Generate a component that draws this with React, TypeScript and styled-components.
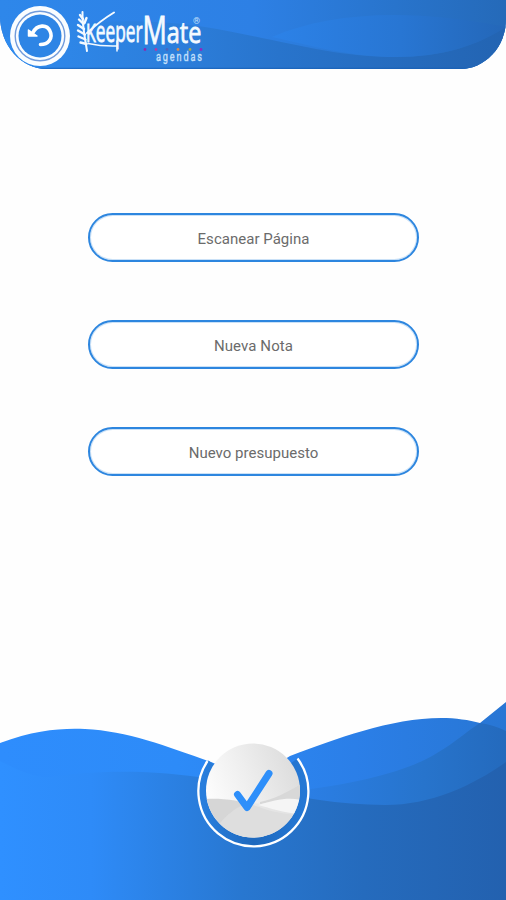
import React from 'react';
import styled, { createGlobalStyle } from 'styled-components';

const GlobalStyle = createGlobalStyle`
  * { box-sizing: border-box; }
  body { margin: 0; background: #fefefe; }
`;

const Screen = styled.div`
  display: flex;
  flex-direction: column;
  width: 506px;
  height: 900px;
  overflow: hidden;
  background: #fefefe;
  font-family: Roboto, 'Liberation Sans', sans-serif;
`;

const Header = styled.header`
  position: relative;
  flex: none;
  display: flex;
  align-items: flex-start;
  height: 69px;
  border-radius: 0 0 46px 47px / 0 0 50px 53px;
  background: #2877d6;
`;

const HeaderWaves = styled.svg`
  position: absolute;
  inset: 0;
  border-radius: inherit;
`;

const BackButton = styled.button`
  position: relative;
  flex: none;
  width: 60px;
  height: 60px;
  margin: 6px 0 0 10px;
  padding: 0;
  border: 0;
  border-radius: 50%;
  background: none;
  svg { display: block; }
`;

const Logo = styled.svg`
  position: relative;
  flex: none;
  width: 140px;
  height: 69px;
  fill: #f4faff;
  font-family: 'Open Sans', Lato, sans-serif;
`;

const Menu = styled.main`
  flex: none;
  display: flex;
  flex-direction: column;
  align-items: center;
  gap: 58px;
  height: 631px;
  padding-top: 144px;
`;

const MenuButton = styled.button`
  width: 331px;
  height: 49px;
  padding: 2px 0 0 1px;
  border: 2px solid #2d86df;
  border-radius: 25px;
  box-shadow: inset 0 0 0 1px rgba(45, 134, 223, 0.25);
  background: #fff;
  color: #6b6b6b;
  font-family: inherit;
  font-size: 15px;
  line-height: 18px;
  letter-spacing: ${(p: { $tracking: number }) => p.$tracking}px;
`;

const Footer = styled.footer`
  position: relative;
  flex: none;
  display: flex;
  justify-content: center;
  height: 200px;
`;

const FooterWaves = styled.svg`
  position: absolute;
  inset: 0;
`;

const ConfirmButton = styled.button`
  position: relative;
  width: 114px;
  height: 114px;
  margin-top: 34px;
  padding: 0;
  border: 0;
  border-radius: 50%;
  background: none;
  svg { display: block; }
`;

const menuItems = [
  { label: 'Escanear Página', tracking: 0.02 },
  { label: 'Nueva Nota', tracking: 0.1 },
  { label: 'Nuevo presupuesto', tracking: 0.02 },
];

const dots = [
  { x: 75, fill: '#8a2bb0' },
  { x: 86, fill: '#b13ca5' },
  { x: 97, fill: '#4c65bd' },
  { x: 108, fill: '#d98b4d' },
  { x: 120, fill: '#a6a553' },
  { x: 131, fill: '#8e2ac0' },
];

function KeeperMateLogo() {
  return (
    <Logo viewBox="0 0 140 69" aria-label="KeeperMate agendas">
      <g fill="none" stroke="#f4faff" strokeLinecap="round">
        <path strokeWidth="2" d="M12.5 12C12 24 15 38 17 51M44 12.5Q30 21 17 33" />
        <path strokeWidth="1.5" d="M18 43.5Q32 46.5 47 46M47 41V51" />
        <path strokeWidth="2.4" d="M13 19L10 15M13.5 24L9 19.5M14 29L8 25M15 34.5L8 30.5M15.5 39.5L8.5 36.5M16.5 44L10.5 42.5M14.5 23L16.5 18" />
      </g>
      <text transform="translate(16 42) scale(.64 1)" fontSize="28" stroke="#f4faff" strokeWidth=".8">
        <tspan fontSize="25">K</tspan>
        <tspan fontSize="29" textLength="73" lengthAdjust="spacingAndGlyphs">eeper</tspan>
        <tspan fontSize="38" dy="1.5" textLength="38" lengthAdjust="spacingAndGlyphs">M</tspan>
        <tspan fontSize="30" dy="-1" textLength="54" lengthAdjust="spacingAndGlyphs">ate</tspan>
      </text>
      <text x="123" y="24" fontSize="9" fontFamily="Roboto" fill="#c5e0fb">®</text>
      {dots.map((d) => (
        <circle key={d.x} cx={d.x} cy="49.5" r="1.4" fill={d.fill} />
      ))}
      <text transform="translate(86 60.5) scale(.7 1)" fontSize="13" fontFamily="Roboto" fill="#c5e0fb" stroke="#c5e0fb" strokeWidth=".35" letterSpacing="2.7">agendas</text>
    </Logo>
  );
}

export default function App() {
  return (
    <>
      <GlobalStyle />
      <Screen>
        <Header>
          <HeaderWaves width="506" height="69" viewBox="0 0 506 69">
            <defs>
              <linearGradient id="headTop">
                <stop offset="0" stopColor="#2e87ea" />
                <stop offset=".5" stopColor="#2d80e5" />
                <stop offset=".78" stopColor="#2874cc" />
                <stop offset="1" stopColor="#256ab9" />
              </linearGradient>
              <linearGradient id="headLow">
                <stop offset="0" stopColor="#2f8bef" />
                <stop offset=".35" stopColor="#2c7edb" />
                <stop offset=".55" stopColor="#2874cc" />
                <stop offset="1" stopColor="#2364b2" />
              </linearGradient>
              <linearGradient id="headLens">
                <stop offset="0" stopColor="#2c82e8" />
                <stop offset=".55" stopColor="#2876d3" />
                <stop offset="1" stopColor="#2467b8" />
              </linearGradient>
            </defs>
            <path fill="url(#headTop)" d="M0 0H506V69H0Z" />
            <path fill="url(#headLow)" d="M0 39C70 18 145 18 205 27C278 39 330 57 396 57C443 57 476 46 506 26V69H0Z" />
            <path fill="url(#headLens)" d="M272 37C330 12 412 8 506 27C477 46 441 57 396 57C352 57 316 47 272 37Z" />
            <path stroke="#1760b5" strokeOpacity=".65" strokeWidth="1.5" d="M0 68.4H506" />
          </HeaderWaves>
          <BackButton aria-label="Volver">
            <svg width="60" height="60" viewBox="0 0 60 60">
              <circle cx="30" cy="30" r="30" fill="#fafdff" />
              <circle cx="30" cy="30" r="24.8" fill="none" stroke="#719bdb" strokeWidth="1.4" />
              <circle cx="30" cy="30" r="21.5" fill="#2e85e5" />
              <path d="M23 26.5C27 18.5 37 18 40 25C43.5 32.5 38 38.5 30.5 38.5" fill="none" stroke="#fff" strokeWidth="3.6" strokeLinecap="round" />
              <path d="M18.5 24V30H27Z" fill="#fff" stroke="#fff" strokeWidth="1.5" strokeLinejoin="round" />
            </svg>
          </BackButton>
          <KeeperMateLogo />
        </Header>
        <Menu>
          {menuItems.map((item) => (
            <MenuButton key={item.label} $tracking={item.tracking}>{item.label}</MenuButton>
          ))}
        </Menu>
        <Footer>
          <FooterWaves width="506" height="200" viewBox="0 0 506 200">
            <defs>
              <linearGradient id="base" gradientUnits="userSpaceOnUse" x1="0" y1="60" x2="506" y2="60">
                <stop offset="0" stopColor="#2f90ff" />
                <stop offset=".18" stopColor="#2e8bf8" />
                <stop offset=".48" stopColor="#2877d0" />
                <stop offset=".72" stopColor="#256bbd" />
                <stop offset="1" stopColor="#2361af" />
              </linearGradient>
              <linearGradient id="crest" gradientUnits="userSpaceOnUse" x1="0" y1="0" x2="506" y2="0">
                <stop offset="0" stopColor="#2e8dfd" />
                <stop offset=".35" stopColor="#2d8bf8" />
                <stop offset=".7" stopColor="#2b7fe8" />
                <stop offset="1" stopColor="#2876d4" />
              </linearGradient>
              <linearGradient id="lens" gradientUnits="userSpaceOnUse" x1="300" y1="0" x2="506" y2="0">
                <stop offset="0" stopColor="#2b7fe6" />
                <stop offset=".6" stopColor="#2774cc" />
                <stop offset="1" stopColor="#246abd" />
              </linearGradient>
            </defs>
            <path fill="url(#crest)" d="M0 43C35 30 61 28 85 29C127 31 166 46 211 62L253 79L290 56C335 39 391 18 441 18C456 18 469 20 480 23L506 2V110H0Z" />
            <path fill="url(#lens)" d="M290 92C361 83 408 71 437 53C456 42 463 34 480 23Q494 25 506 31V110H290Z" />
            <path fill="url(#base)" d="M0 61C16 69 31 77 49 77C80 72 139 68 198 77C250 87 318 105 385 105C431 105 472 86 506 62V200H0Z" />
          </FooterWaves>
          <ConfirmButton aria-label="Confirmar">
            <svg width="114" height="114" viewBox="0 0 114 114">
              <defs>
                <linearGradient id="disc" x1="0" y1=".7" x2="1" y2=".3">
                  <stop offset="0" stopColor="#fff" />
                  <stop offset=".5" stopColor="#eee" />
                  <stop offset="1" stopColor="#dcdcdc" />
                </linearGradient>
                <linearGradient id="ring" x1="0" x2="1">
                  <stop offset="0" stopColor="#287edd" />
                  <stop offset=".5" stopColor="#1e69be" />
                  <stop offset="1" stopColor="#2578d5" />
                </linearGradient>
                <clipPath id="discClip"><circle cx="57" cy="56.5" r="47" /></clipPath>
              </defs>
              <path d="M16 29A50.5 50.5 0 1 0 98 27" fill="none" stroke="url(#ring)" strokeWidth="9" />
              <path d="M11.5 27A55 55 0 1 0 101.5 24.5" fill="none" stroke="#fff" strokeWidth="2.3" />
              <circle cx="57" cy="56.5" r="47" fill="url(#disc)" />
              <g clipPath="url(#discClip)">
                <path fill="#d6d6d6" d="M8 65C30 64 45 67 63 73C76 78 91 81 107 81V108H8Z" />
                <path fill="#e2e2e2" fillOpacity=".65" d="M24 89C38 73 50 67 66 70L105 80V108H24Z" />
                <path fill="#d8d8d8" d="M64 68C79 65 91 58 107 49V67C94 64 77 69 64 70Z" />
                <path fill="#f5f5f5" d="M62 71C79 66 91 63 106 66L103 80C88 79 74 74 62 71Z" />
              </g>
              <path d="M41.5 60.5L51 73.5L73 39.5" fill="none" stroke="#2e8ffa" strokeWidth="7" strokeLinecap="round" strokeLinejoin="round" />
            </svg>
          </ConfirmButton>
        </Footer>
      </Screen>
    </>
  );
}
